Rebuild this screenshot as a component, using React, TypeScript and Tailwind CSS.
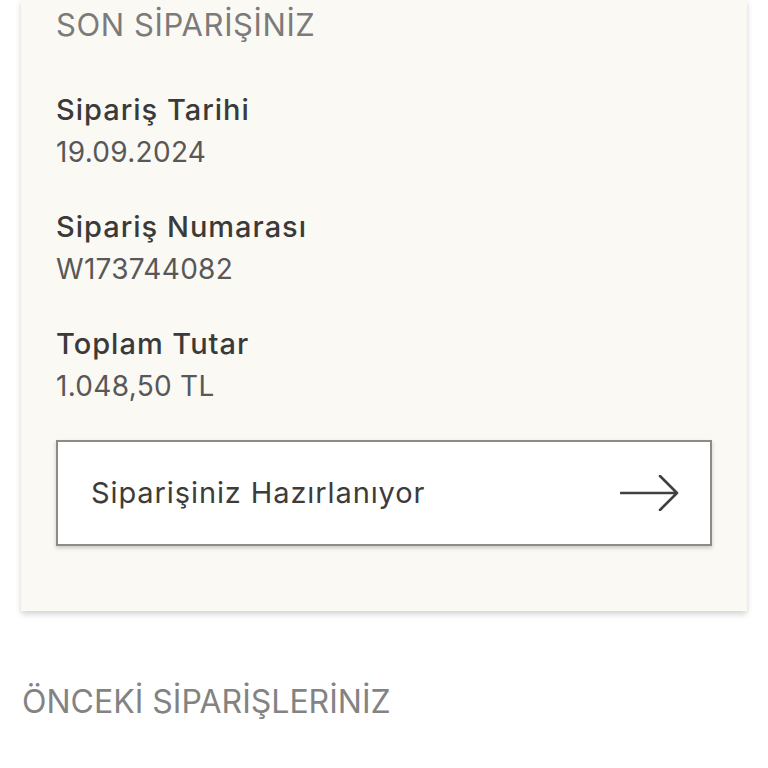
const font = { fontFamily: "Inter, 'Noto Sans', sans-serif" };

interface InfoRowProps {
  label: string;
  value: string;
}

const InfoRow = ({ label, value }: InfoRowProps) => (
  <div className="flex flex-col">
    <span className="text-[29px] font-medium leading-[42px] tracking-[1px] text-[#3a3a3a]">
      {label}
    </span>
    <span className="text-[28px] leading-[42px] tracking-[0.3px] text-[#585858]">
      {value}
    </span>
  </div>
);

export default function App() {
  return (
    <div className="min-h-[768px] w-full bg-white" style={font}>
      <div className="mx-[21px] bg-[#fbf9f4] px-[35px] pb-[65px] pt-[7px] shadow-[0_3px_6px_rgba(0,0,0,0.18)]">
        <h2 className="text-[31px] leading-[36px] tracking-[0.6px] text-[#7b7b7b]">
          SON SİPARİŞİNİZ
        </h2>
        <div className="mt-[46px] flex flex-col gap-[33px]">
          <InfoRow label="Sipariş Tarihi" value="19.09.2024" />
          <InfoRow label="Sipariş Numarası" value="W173744082" />
          <InfoRow label="Toplam Tutar" value="1.048,50 TL" />
        </div>
        <button className="mt-[33px] flex h-[106px] w-full items-center justify-between border-2 border-[#8e8a86] bg-white pl-[33px] pr-[31px] shadow-[0_2px_4px_rgba(0,0,0,0.2)]">
          <span className="text-[29px] tracking-[0.9px] text-[#3c3c3c]">
            Siparişiniz Hazırlanıyor
          </span>
          <svg width="59" height="36" viewBox="0 0 59 36" fill="none">
            <path
              d="M1 18H57M40 1L57 18L40 35"
              stroke="#404040"
              strokeWidth="2.6"
              strokeLinecap="round"
              strokeLinejoin="round"
            />
          </svg>
        </button>
      </div>
      <h2 className="mt-[71px] pl-[22px] text-[32px] leading-[40px] text-[#838383]">
        ÖNCEKİ SİPARİŞLERİNİZ
      </h2>
    </div>
  );
}
